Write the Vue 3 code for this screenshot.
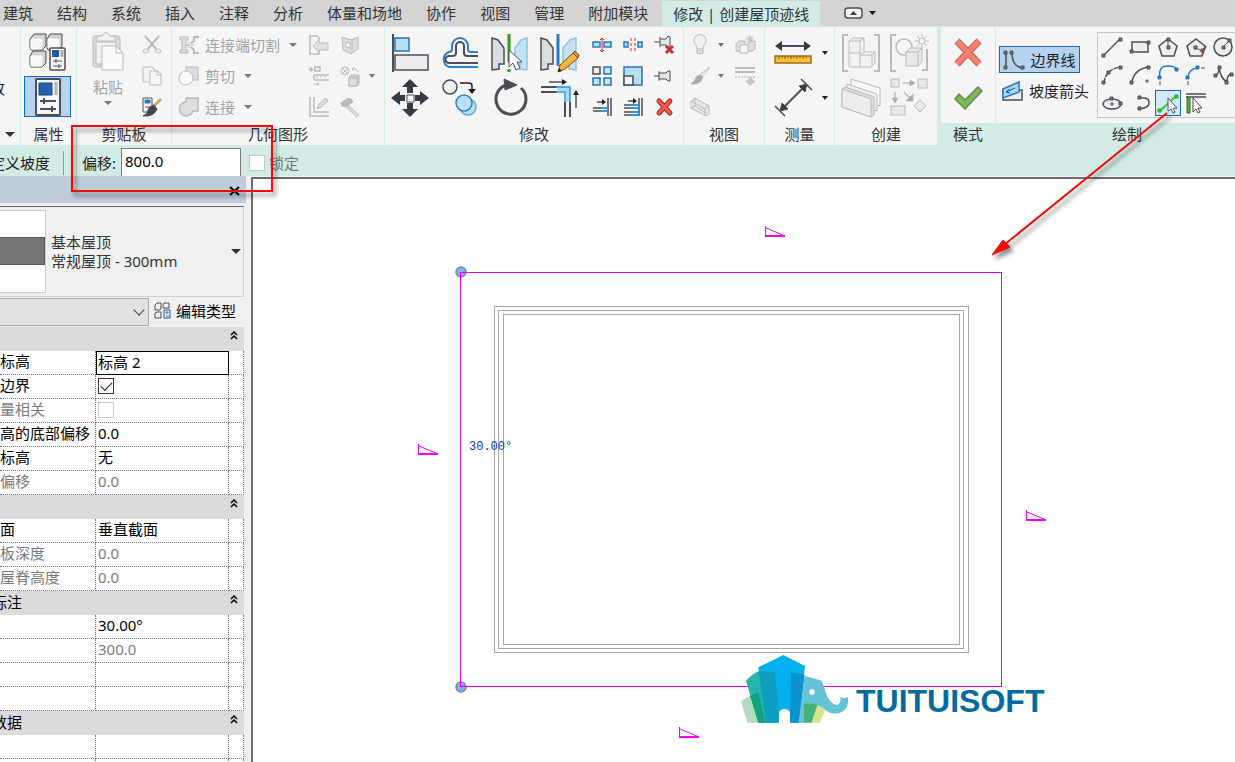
<script setup>
import { ref } from 'vue'

const tabs = ['建筑', '结构', '系统', '插入', '注释', '分析', '体量和场地', '协作', '视图', '管理', '附加模块']
const offset = ref('800.0')
const locked = ref(false)

const groups = [
  {
    title: '',
    rows: [
      { name: '标高', value: '标高 2', active: true },
      { name: '边界', check: true, checked: true },
      { name: '量相关', check: true, checked: false, dim: true },
      { name: '高的底部偏移', value: '0.0' },
      { name: '标高', value: '无' },
      { name: '偏移', value: '0.0', dim: true }
    ]
  },
  {
    title: '',
    rows: [
      { name: '面', value: '垂直截面' },
      { name: '板深度', value: '0.0', dim: true },
      { name: '屋脊高度', value: '0.0', dim: true }
    ]
  },
  {
    title: '标注',
    rows: [
      { name: '', value: '30.00°' },
      { name: '', value: '300.0', dim: true },
      { name: '', value: '' },
      { name: '', value: '' }
    ]
  },
  {
    title: '数据',
    rows: [
      { name: '', value: '' },
      { name: '', value: '' }
    ]
  }
]

const slopes = [[765, 226], [418, 444], [1026, 510], [679, 727]]
</script>

<template>
  <div class="app">
    <nav class="tabs">
      <button v-for="t in tabs" :key="t" class="tab">{{ t }}</button>
      <button class="tab current">修改 | 创建屋顶迹线</button>
      <button class="tab collapse" aria-label="最小化功能区">
        <svg width="34" height="14">
          <rect x="1" y="2" width="17" height="10" rx="3" fill="#f2f2f2" stroke-width="1.500" />
          <path d="M6 9h7L9.500 5z" fill="#3a3f47" stroke="none" />
          <path d="M25 5h7l-3.500 4z" fill="#111" stroke="none" />
        </svg>
      </button>
    </nav>

    <div class="ribbon">
      <section class="panel p-select">
        <div class="body"><span class="cut">修改</span></div>
        <h2><i class="caret large"></i></h2>
      </section>

      <section class="panel p-props">
        <div class="body stack">
          <button class="prop" aria-label="类型属性">
            <svg width="40" height="40">
              <g fill="#cfd2d6">
                <path d="M2 7l4-5h12v12l-4 4H3l-1-2zM19 7l3-5h12v12l-3 4H20l-1-2zM2 24l3-5h13v12l-4 4H3l-1-2z" />
                <path d="M3 7h11v10H3zM20 7h11v9H20zM3 24h11v10H3z" fill="#f8f8f9" stroke="#fff" />
              </g>
              <rect x="22" y="16" width="15" height="22" rx="1" fill="#f8f8f8" stroke-width="1.500" />
              <path d="M24 18h7v7h-7z" fill="#1d5a9e" stroke="none" />
              <path d="M34 18v7" stroke="#aaa" stroke-width="3" />
              <path d="M25 29h9M28 27v4M25 34h9M31 32v4" />
            </svg>
          </button>
          <button class="prop on" aria-label="属性">
            <svg width="30" height="38">
              <rect x="3" y="1" width="24" height="36" rx="1" fill="#f6f6f6" stroke-width="2" />
              <path d="M6 5h13v12H6z" fill="#2463a8" stroke="#134a87" />
              <path d="M23 4v13" stroke="#b3b3b3" stroke-width="3" />
              <path d="M7 23h16M11 20v6M7 31h16M19 28v6" stroke-width="2" />
            </svg>
          </button>
        </div>
        <h2>属性</h2>
      </section>

      <section class="panel p-clip">
        <div class="body row">
          <button class="paste" disabled>
            <svg width="36" height="40">
              <rect x="3" y="5" width="27" height="31" rx="2" fill="#dcdcdc" />
              <path d="M7 10V5h5q4-7 8 0h5v5z" fill="#f1f1f1" />
              <path d="M6 11h20v22H6z" fill="#f2f2f2" />
              <path d="M12 15h14l7 7v17H12z" fill="#fafafa" /><path d="M26 15v7h7" />
            </svg>
            <span>粘贴</span>
            <i class="caret"></i>
          </button>
          <div class="stack small">
            <button disabled aria-label="剪切到剪贴板"><svg width="20" height="20"><path d="M3 1l11 13M17 1L6 14" stroke-width="2" /><ellipse cx="4" cy="16" rx="3" ry="2" fill="#eee" /><ellipse cx="16" cy="16" rx="3" ry="2" fill="#eee" /></svg></button>
            <button disabled aria-label="复制到剪贴板"><svg width="20" height="20"><path d="M1 1h9l3 3v12H1z" fill="#f3f3f3" /><path d="M8 5h8l3 3v11H8z" fill="#f8f8f8" /><path d="M15 5v4h4" /></svg></button>
            <button aria-label="匹配类型属性"><svg width="20" height="20"><path d="M1 1h9v14H1z" fill="#f6f6f6" /><path d="M3 3h5v3H3z" fill="#2b78c4" stroke="#2b78c4" /><path d="M3 10h5" /><path d="M19 2l-7 7" stroke="#c9a66a" stroke-width="3" /><path d="M12 8q-5 1-6 5 0 4-5 6 11 1 14-7z" fill="#42474e" /></svg></button>
          </div>
        </div>
        <h2>剪贴板</h2>
      </section>

      <section class="panel p-geom">
        <div class="body row">
          <div class="stack small wide">
            <button disabled><svg width="20" height="20"><path d="M1 2h8v3H7v10h2v3H1v-3h2V5H1z" fill="#ddd" /><path d="M15 10H8M11 7l-3 3 3 3" /><path d="M20 2h-5v4l-3 2M12 12l3 3v3h5" stroke-width="2" /></svg><span>连接端切割</span><i class="caret"></i></button>
            <button disabled><svg width="20" height="20"><path d="M7 1h12v13H7z" fill="#ddd" /><circle cx="7" cy="12" r="7" fill="#fafafa" /></svg><span>剪切</span><i class="caret"></i></button>
            <button disabled><svg width="20" height="20"><path d="M7 1h12v13h-5a7 7 0 1 1-7-9z" fill="#ddd" stroke-width="1.500" /></svg><span>连接</span><i class="caret"></i></button>
          </div>
          <div class="grid tiny two">
            <button disabled aria-label="连接屋顶"><svg width="20" height="20"><path d="M10 5V3L8 1H1v18h9v-3" fill="#f5f5f5" stroke-width="1.500" /><path d="M4 11l6-6v3h9v7h-9v2z" fill="#e2e2e2" /></svg></button>
            <button disabled aria-label="拆分面"><svg width="20" height="20"><path d="M2 2l9 3 7-3v12l-7 5-8-4z" fill="#dedede" /><path d="M12 5v13" /><path d="M6 7l4 1v5l-4-1z" fill="#f8f8f8" /></svg></button>
            <button disabled aria-label="墙连接"><svg width="20" height="20"><path d="M2 1v4M0 3l2 2 2-2M6 1h5v4H6zM5 9h15M5 14h15M5 9v5" stroke-width="1.500" /><path d="M7 11h2m2 0h2m2 0h2M5 18h5M8 16l2 2-2 2" /></svg></button>
            <button disabled aria-label="填色"><svg width="20" height="20"><circle cx="5" cy="5" r="4" fill="#eee" /><path d="M2 2l6 6M8 2L2 8M18 6q-1-4-6-3M14 1l-2 2 2 2" /><path d="M9 11l2-2h8v9l-2 2H9z" fill="#ccc" /><path d="M9 12h8v8H9z" fill="#dedede" /></svg></button>
            <button disabled aria-label="梁连接"><svg width="20" height="20"><path d="M1 0v19h19M5 0v15h15" stroke-width="1.500" /><path d="M8 12l2-5 7-6 2 3-7 6z" fill="#ddd" /></svg></button>
            <button disabled aria-label="拆除"><svg width="20" height="20"><path d="M9 9l10 9-2 2-10-9z" fill="#ddd" /><path d="M1 6l7-5q4 0 5 4L6 10l-4-1z" fill="#bbb" /></svg></button>
          </div>
          <i class="caret faint"></i>
        </div>
        <h2>几何图形</h2>
      </section>

      <section class="panel p-modify">
        <div class="body row">
          <div class="grid big four">
            <button aria-label="对齐"><svg width="40" height="40"><path d="M3 1v38" stroke-width="2" /><rect x="5" y="5" width="14" height="13" fill="#b9dff2" stroke="#2574b9" stroke-width="1.500" /><rect x="5" y="22" width="33" height="15" fill="#ececf0" stroke-width="1.500" /></svg></button>
            <button aria-label="偏移"><svg width="40" height="40"><path d="M38 19H31Q28 19 28 16V13A8 8 0 0 0 12 13V16Q12 19 9 19A8 8 0 0 0 9 34H38" stroke="#2b82cb" stroke-width="2" /><path d="M38 23H27Q24 23 24 20V13A4 4 0 0 0 16 13V20Q16 23 12 23H9A3 3 0 0 0 9 30H38" stroke-width="2" /></svg></button>
            <button aria-label="镜像 - 拾取轴"><svg width="40" height="40"><path d="M2 5l6 2 6 8v16H9v5l-7 1z" fill="#dcdde2" stroke-width="1.500" /><path d="M37 5l-6 2-6 8v16h5v5l7 1z" fill="#c5e2f2" stroke="#8fc3e3" stroke-width="1.500" /><path d="M19 1v28M19 36v3" stroke="#2d9d22" stroke-width="3" /><path d="M19 17v17l4-4 3 7 4-2-3-6h5z" fill="#fff" /></svg></button>
            <button aria-label="镜像 - 绘制轴"><svg width="40" height="40"><path d="M1 5l6 2 6 8v16H8v5l-7 1z" fill="#dcdde2" stroke-width="1.500" /><path d="M36 5l-6 2-7 8v16h6v5l7 1z" fill="#c5e2f2" stroke="#8fc3e3" stroke-width="1.500" /><path d="M18 1v32" stroke="#2878c8" stroke-width="3" /><path d="M18 39l2-7 13-12 5 5-13 11z" fill="#f4b63a" stroke="#74501a" /><path d="M18 39l1-4 3 3z" fill="#222" stroke="none" /><path d="M33 20l2-2 4 4-1 3z" fill="#e78273" stroke="#74501a" /></svg></button>
            <button aria-label="移动"><svg width="40" height="40"><path d="M20 1l8 8h-5v6h-6V9h-5zM20 39l8-8h-5v-6h-6v6h-5zM1 20l9-7v4h5v6h-5v4zM39 20l-9-7v4h-5v6h5v4z" fill="#353b44" stroke="none" /><rect x="17" y="17" width="7" height="7" fill="#fff" /></svg></button>
            <button aria-label="复制"><svg width="40" height="40"><circle cx="10" cy="9" r="7" fill="#eeeef2" stroke-width="1.500" /><path d="M20 5h9q3 0 3 3v5" stroke="#222" stroke-width="1.500" /><path d="M28 11h8l-4 5z" fill="#222" stroke="none" /><circle cx="28" cy="29" r="8" fill="#b9dff2" stroke="#62a9df" stroke-width="1.500" /><circle cx="24" cy="25" r="8" fill="#b9dff2" stroke="#2f80c4" stroke-width="1.500" /></svg></button>
            <button aria-label="旋转"><svg width="40" height="40"><path d="M31 10A15 15 0 1 1 16 7" stroke-width="3" /><path d="M14 1l13 6-12 5z" fill="#4a4f57" /></svg></button>
            <button aria-label="修剪/延伸为角"><svg width="40" height="40"><path d="M1 9h16M1 14h16M25 24v15M30 24v15" stroke-width="2" /><path d="M17 11h11v13" stroke="#a8d8f8" stroke-width="4" /><path d="M16 9h14v15M16 14h9v10" stroke="#3294e8" stroke-width="1.500" /><path d="M9 4h15M36 30V15" stroke-width="1.500" /><path d="M22 1l5 3-5 3zM33 17l3-5 3 5z" fill="#222" stroke="none" /></svg></button>
          </div>
          <div class="grid tiny three">
            <button aria-label="拆分图元"><svg width="20" height="20"><path d="M1 7h7v5H1zM12 7h7v5h-7z" fill="#b6ddf5" stroke="#2878b8" stroke-width="1.500" /><path d="M10 3v14M8 5l2-2 2 2M8 15l2 2 2-2" stroke="#d22" /></svg></button>
            <button aria-label="用间隙拆分"><svg width="20" height="20"><path d="M1 7h4v5H1zM15 7h4v5h-4z" fill="#b6ddf5" stroke="#2878b8" stroke-width="1.500" /><path d="M8 3v14M12 3v14" stroke="#d22" stroke-dasharray="3 2" /></svg></button>
            <button aria-label="解锁"><svg width="20" height="20"><path d="M0 7h6M6 2v10M6 4h6l2-3 2 1v9l-2 1-2-2H6" fill="#e5e5e5" /><path d="M12 11l7 7M19 11l-7 7" stroke="#c9302c" stroke-width="3" /></svg></button>
            <button aria-label="阵列"><svg width="20" height="20"><path d="M1 1h7v7H1z" fill="#eee" stroke-width="1.500" /><path d="M12 1h7v7h-7zM1 12h7v7H1zM12 12h7v7h-7z" fill="#c2e4f7" stroke="#2574b9" stroke-width="1.500" /></svg></button>
            <button aria-label="缩放"><svg width="20" height="20"><path d="M1 1h18v18H1z" fill="#b9dff2" stroke="#2574b9" stroke-width="1.500" /><path d="M1 10h9v9H1z" fill="#f2f2f2" stroke-width="1.500" /></svg></button>
            <button aria-label="锁定位置"><svg width="20" height="20"><path d="M0 10h5M5 5v10M5 7h7l2-2h2v10h-2l-2-2H5" fill="#e5e5e5" /></svg></button>
            <button aria-label="修剪/延伸单个图元"><svg width="20" height="20"><path d="M1 11h8M1 14h8M19 1v18M16 1v18M5 5h6" stroke-width="1.500" /><path d="M9 11h7M9 14h7" stroke="#3294e8" stroke-width="2" /><path d="M10 2l4 3-4 3z" fill="#222" stroke="none" /></svg></button>
            <button aria-label="修剪/延伸多个图元"><svg width="20" height="20"><path d="M1 8h7M1 11h7M1 15h7M1 18h7M19 1v18M16 1v18M5 4h6" stroke-width="1.500" /><path d="M8 8h8M8 11h8M8 15h8M8 18h8" stroke="#3294e8" stroke-width="2" /><path d="M10 1l4 3-4 3z" fill="#222" stroke="none" /></svg></button>
            <button aria-label="删除"><svg width="20" height="20"><path d="M5 4l11 12M16 4L5 16" stroke="#a52620" stroke-width="5" stroke-linecap="round" /><path d="M5 4l11 12M16 4L5 16" stroke="#f25b52" stroke-width="3" stroke-linecap="round" /></svg></button>
          </div>
        </div>
        <h2>修改</h2>
      </section>

      <section class="panel p-view">
        <div class="body row">
          <div class="stack small arrows">
            <button disabled aria-label="隐藏"><svg width="20" height="20"><path d="M7 14q0-3-2-5a6 6 0 1 1 10 0q-2 2-2 5v4q-3 2-6 0zM7 14h6M7 16h6" fill="#f0f0f0" /></svg><i class="caret faint"></i></button>
            <button disabled aria-label="替换"><svg width="20" height="20"><path d="M19 1l-9 8 2 2 7-8z" fill="#eee" /><path d="M10 9q-5 1-5 5l-4 4q10 1 12-7z" fill="#aaa" /></svg><i class="caret faint"></i></button>
            <button disabled aria-label="选择框"><svg width="20" height="20"><path d="M1 4l4-3 14 8v8l-3 2L1 11z" fill="#e8e8e8" /><path d="M1 4l14 8v7M15 12l4-3M5 1v8l11 7M1 11l4-2" /></svg></button>
          </div>
          <div class="stack small">
            <button disabled aria-label="置换图元"><svg width="20" height="20"><path d="M1 9l3-3h6v8l-3 2H1zM12 9l3-3h5v8l-3 2h-5z" fill="#ddd" /><path d="M5 10h8v8H5z" fill="#f7f7f7" /><path d="M15 0v8M11 4h8M12 1l6 6M18 1l-6 6" /></svg></button>
            <button disabled aria-label="线处理"><svg width="20" height="20"><path d="M0 2h20M0 6h20" stroke-width="2" /><path d="M0 11h20" stroke-dasharray="2 1" /><path d="M14 12h3v3h3l-5 4-4-4h3z" fill="#ccc" /></svg></button>
          </div>
        </div>
        <h2>视图</h2>
      </section>

      <section class="panel p-measure">
        <div class="body">
          <div class="stack bigcol">
            <button aria-label="测量"><svg width="40" height="40"><path d="M6 13h28" stroke-width="2" /><path d="M2 13l7-5v10zM38 13l-7-5v10z" fill="#353b44" stroke="none" /><path d="M2 23h36v7H2z" fill="#f2c230" stroke="#a9652a" stroke-width="1.500" /><path d="M6 23v3m3-3v2m3-2v3m3-3v2m3-2v3m3-3v2m3-2v3m3-3v2m3-2v3m3-3v2" stroke="#8a5c14" /></svg><i class="caret dark"></i></button>
            <button aria-label="对齐尺寸标注"><svg width="40" height="40"><path d="M28 1l11 11M2 28l10 10" stroke-width="1.500" /><path d="M10 30L31 9" stroke-width="2" /><path d="M34 6l-8 2 6 6zM7 33l8-2-6-6z" fill="#353b44" /></svg><i class="caret dark"></i></button>
          </div>
        </div>
        <h2>测量</h2>
      </section>

      <section class="panel p-create">
        <div class="body">
          <div class="grid big pair">
            <button disabled aria-label="创建组"><svg width="40" height="40"><path d="M7 2H2v36h5M33 2h5v36h-5" stroke-width="2" /><path d="M8 8l4-3h11v14h11v11l-4 4H8z" fill="#f2f2f2" /><path d="M8 8h11v26M19 8l4-3M8 20h12M20 22h11l3-3M31 22v11M19 22l4-3" /></svg></button>
            <button disabled aria-label="创建零件"><svg width="40" height="40"><path d="M7 2H2v36h5M33 37h5V16" stroke-width="2" /><circle cx="15" cy="14" r="8" stroke-width="1.500" /><path d="M17 19l4-4h12v13l-4 5H17z" fill="#e9e9e9" /><path d="M17 19h12v14M29 19l4-4" /><path d="M33 1v14M26 8h14M28 3l10 10M38 3L28 13" /><circle cx="33" cy="8" r="3" fill="#f5f5f5" /></svg></button>
            <button disabled aria-label="创建部件"><svg width="40" height="40"><path d="M10 1l29 9v18l-8-2-21-8z" fill="#f8f8f8" /><path d="M6 6l30 10v17l-6-2L6 22z" fill="#eee" /><path d="M1 11l3-2 29 10v18l-3 2L1 29z" fill="#ddd" /><path d="M1 11l29 10v18L1 29z" fill="#ededed" /></svg></button>
            <button disabled aria-label="创建类似实例"><svg width="40" height="40"><path d="M2 1h8v8H2zM29 1h9v9h-9zM2 28h14v9H2zM31 22l6 6-6 6-6-6z" fill="#e9e9e9" /><path d="M14 5h8M6 14v8M15 14l6 6" stroke-width="1.500" /><path d="M21 2l5 3-5 3zM3 20l3 5 3-5zM24 16v7h-7z" fill="#aaa" /></svg></button>
          </div>
        </div>
        <h2>创建</h2>
      </section>

      <section class="panel context p-mode">
        <div class="body stack bigcol">
          <button aria-label="取消编辑模式"><svg width="40" height="40"><path d="M9 8l22 23M31 8L9 31" stroke="#c75c52" stroke-width="7" /><path d="M9 8l22 23M31 8L9 31" stroke="#f58072" stroke-width="5" /></svg></button>
          <button aria-label="完成编辑模式"><svg width="40" height="40"><path d="M7 21l4-5 6 6L30 9l4 4-17 18z" fill="#7cb660" stroke="#5f8e48" stroke-width="1.500" /></svg></button>
        </div>
        <h2>模式</h2>
      </section>

      <section class="panel context p-draw">
        <div class="body row">
          <div class="kinds">
            <button class="on"><svg width="22" height="20"><path d="M3 3v15M9 3q0 14 11 15" stroke-width="1.500" /><path d="M1 1h3v3H1zM1 16h3v3H1zM7 1h3v3H7zM18 16h3v3h-3z" fill="#777" /></svg><span>边界线</span></button>
            <button><svg width="22" height="20"><path d="M1 9h19v10H1z" fill="#eee" stroke-width="1.500" /><path d="M1 8l16-7v10L1 17z" fill="#a9d6f3" stroke="#2878c8" stroke-width="1.500" /><path d="M4 11l9-4M7 8l-3 3 4 1" stroke="#155a9d" /></svg><span>坡度箭头</span></button>
          </div>
          <div class="palette">
            <button aria-label="线"><svg width="20" height="20"><path d="M2 18L18 2" stroke-width="1.500" /><path d="M0 17h3v3H0zM17 1h3v3h-3z" fill="#777" /></svg></button>
            <button aria-label="矩形"><svg width="20" height="20"><path d="M2 5h16v10H2z" fill="#eee" stroke-width="1.500" /><path d="M0 13h3v3H0zM17 4h3v3h-3z" fill="#777" /></svg></button>
            <button aria-label="内接多边形"><svg width="20" height="20"><path d="M10 2l9 7-3 10H4L1 9z" fill="#eee" stroke-width="1.500" /><path d="M10 3v8" /><path d="M9 1h3v3H9zM9 9h3v3H9z" fill="#777" /></svg></button>
            <button aria-label="外接多边形"><svg width="20" height="20"><path d="M10 2l9 7-3 10H4L1 9z" fill="#eee" stroke-width="1.500" /><path d="M10 11l6 3" /><path d="M20 9l-4 10" stroke="#e22" stroke-dasharray="4 2" stroke-width="1.500" /><path d="M8 9h3v3H8zM15 12h3v3h-3z" fill="#777" /></svg></button>
            <button aria-label="圆形"><svg width="20" height="20"><circle cx="9" cy="10" r="9" fill="#eee" stroke-width="1.500" /><path d="M9 10l6-6" /><path d="M8 9h3v3H8zM14 2h3v3h-3z" fill="#777" /></svg></button>
            <button aria-label="起点-终点-半径弧"><svg width="20" height="20"><path d="M2 18Q3 5 18 2" stroke-width="1.500" stroke-dasharray="5 1" /><path d="M0 16h3v3H0zM5 6h3v3H5zM17 1h3v3h-3z" fill="#777" /></svg></button>
            <button aria-label="圆心-端点弧"><svg width="20" height="20"><path d="M2 18Q3 5 18 2" stroke-width="1.500" /><path d="M0 16h3v3H0zM17 1h3v3h-3z" fill="#777" /><path d="M17 14v4M15 16h4" /></svg></button>
            <button aria-label="相切-端点弧"><svg width="20" height="20"><path d="M2 12Q0 1 10 1Q17 1 18 4" stroke="#2878c8" stroke-width="1.500" /><path d="M0 11h3v3H0zM17 3h3v3h-3z" fill="#2878c8" stroke="#2878c8" /><path d="M2 16v4" /></svg></button>
            <button aria-label="圆角弧"><svg width="20" height="20"><path d="M2 12Q3 4 11 3" stroke="#2878c8" stroke-width="1.500" /><path d="M0 11h3v3H0zM10 1h3v3h-3z" fill="#2878c8" stroke="#2878c8" /><path d="M2 16v4M15 3h4" /></svg></button>
            <button aria-label="样条曲线"><svg width="20" height="20"><path d="M1 11Q5 9 5 3Q7 14 13 17Q13 10 17 9" stroke-width="1.500" /><path d="M0 9h3v3H0zM4 1h3v3H4zM11 16h3v3h-3zM16 8h3v3h-3z" fill="#777" /></svg></button>
            <button aria-label="椭圆"><svg width="20" height="20"><ellipse cx="10" cy="11" rx="9" ry="5" fill="#eee" stroke-width="1.500" /><path d="M10 9v4M8 11h4" /><path d="M17 9h3v3h-3zM8 4h3v3H8z" fill="#777" /></svg></button>
            <button aria-label="半椭圆"><svg width="20" height="20"><path d="M9 5h5q5 0 5 5t-10 6" stroke-width="1.500" /><path d="M8 3h3v3H8zM8 14h3v3H8z" fill="#777" /></svg></button>
            <button class="on" aria-label="拾取线"><svg width="22" height="22"><path d="M3 19L19 4" stroke="#3c3" stroke-width="2" /><path d="M1 17h3v3H1zM18 3h3v3h-3z" fill="#3c3" stroke="#2a2" /><path d="M11 6v13l3-2 2 4 2-1-2-4h4z" fill="#fff" /></svg></button>
            <button aria-label="拾取墙"><svg width="20" height="20"><path d="M0 1h20M0 4h20" stroke-width="1.500" /><path d="M1 4h3v16H1z" fill="#58a83e" stroke="#2f7421" /><path d="M7 5v14l3-3 2 4 2-1-2-4h4z" fill="#fff" /></svg></button>
          </div>
        </div>
        <h2>绘制</h2>
      </section>
    </div>

    <div class="options">
      <span class="slope">定义坡度</span>
      <label class="offset" for="offset">偏移:</label>
      <input id="offset" v-model="offset" class="field" type="text">
      <label class="lock"><input v-model="locked" type="checkbox" disabled>锁定</label>
    </div>

    <div class="work">
      <aside class="side">
        <header><button aria-label="关闭"><svg width="12" height="10"><path d="M1 1l9 8M10 1L1 9" stroke="#000" stroke-width="2" /></svg></button></header>
        <button class="type">
          <span class="thumb"><i></i></span>
          <span class="names">基本屋顶<br>常规屋顶 - 300mm</span>
          <i class="caret large"></i>
        </button>
        <div class="filter">
          <select aria-label="属性过滤器"><option></option></select>
          <button>
            <svg width="17" height="17"><path d="M1 3l2-2h4v5L6 8H1zM9 3l1-2h5v5H9zM1 11l2-1h4v6H1z" fill="#eee" /><path d="M10 8h6v8h-6z" fill="#eaf3fb" stroke="#24527f" /><path d="M12 10h2v1h-2zM12 14h3" stroke="#2b78c4" /></svg>
            编辑类型
          </button>
        </div>
        <table>
          <colgroup><col class="c1"><col><col class="c3"></colgroup>
          <tbody v-for="(g, gi) in groups" :key="gi">
            <tr class="head">
              <th colspan="3"><div><span>{{ g.title }}</span><svg width="8" height="9"><path d="M1 4l3-3 3 3M1 8l3-3 3 3" stroke="#000" stroke-width="1.500" /></svg></div></th>
            </tr>
            <tr v-for="(r, ri) in g.rows" :key="ri" :class="{ dim: r.dim }">
              <td class="name">{{ r.name }}</td>
              <td :class="{ active: r.active }">
                <input v-if="r.check" type="checkbox" :checked="r.checked" :disabled="r.dim" :aria-label="r.name">
                <template v-else>{{ r.value }}</template>
              </td>
              <td></td>
            </tr>
          </tbody>
        </table>
      </aside>

      <main class="canvas">
        <svg class="drawing">
          <g transform="translate(-253 -179)">
            <g stroke="#a6a6a6">
              <rect x="494.500" y="306.500" width="474" height="346" />
              <rect x="498.500" y="310.500" width="465" height="338" />
              <rect x="503.500" y="314.500" width="456" height="330" />
            </g>
            <circle cx="461" cy="272" r="5" fill="#7fb0f5" stroke="#7d8796" stroke-width="1.500" />
            <circle cx="461" cy="687" r="5" fill="#7fb0f5" stroke="#7d8796" stroke-width="1.500" />
            <rect x="460.500" y="272.500" width="541" height="414" stroke="#e000f8" />
            <g stroke="#f000f8">
              <g v-for="([x, y], i) in slopes" :key="i" :transform="`translate(${x} ${y})`">
                <path d="M.5 0v10M0 1.500l19 8" />
                <path d="M0 10h20" stroke-width="2" />
              </g>
            </g>
            <text x="469" y="450" class="angle">30.00°</text>
            <g transform="translate(730 640) scale(.33333)" stroke="none">
              <path d="M33 183L60 168 85 248H52z" fill="#b3dbbf" />
              <path d="M48 122Q70 98 90 92L135 97 147 248H85z" fill="#25b3ac" />
              <path d="M60 168L85 157 106 248H85z" fill="#0ea37c" />
              <path d="M85 82L160 45 225 78 207 248H108z" fill="#04b0ee" />
              <path d="M86 93L135 97 147 215V248H108z" fill="#0e9ec0" />
              <path d="M183 97L224 104 207 248H180z" fill="#0c93cf" />
              <path d="M224 107L275 122Q282 140 290 165Q302 194 322 195Q334 188 331 170Q342 178 354 170Q358 205 335 216Q312 228 285 210Q262 190 222 190L224 248H206z" fill="#64c3d6" />
              <path d="M222 190Q245 188 264 194L245 248H222z" fill="#45b27a" />
              <path d="M262 195L286 208 270 248H245z" fill="#d9e58c" />
              <path d="M147 249V215Q163 198 180 215V249z" fill="#fff" />
              <circle cx="246" cy="156" r="8" fill="#fff" />
            </g>
            <text x="856" y="712" class="brand">TUITUISOFT</text>
          </g>
        </svg>
      </main>
    </div>

    <svg class="marks" aria-hidden="true">
      <g class="red">
        <rect x="72" y="126" width="200" height="65" stroke="#f50a0a" stroke-width="2" />
        <path d="M1167 113L1004 245" stroke="#f50a0a" stroke-width="2" />
        <path d="M992 255L1003 240 1010 247z" fill="#f50a0a" stroke="#f50a0a" />
      </g>
    </svg>
  </div>
</template>

<style>
html, body { height: 100%; overflow: hidden; }
#app { height: 100%; }
</style>

<style scoped>
.app { position: relative; display: flex; flex-direction: column; height: 100%; overflow: hidden; background: #f0f0f0; color: #1e1e1e; font: 15px/20px "Noto Sans", "Noto Sans CJK SC", sans-serif; }
* { box-sizing: border-box; }
button, input, select { font: inherit; color: inherit; margin: 0; }
button { display: flex; align-items: center; justify-content: center; padding: 0; border: 0; background: none; }
button:disabled { color: #a3a3a3; }
svg { display: block; flex: none; fill: none; stroke: #4a4f57; overflow: visible; }
button:disabled svg { stroke: #bababa; }
.row { display: flex; }
.stack { display: flex; flex-direction: column; }
.grid { display: grid; }

.tabs { display: flex; height: 26px; background: #d4d4d4; padding-left: 3px; flex: none; }
.tab { flex: none; margin-right: 24px; white-space: pre; color: #333; }
.tab.current { margin: 1px 24px 0 -10px; padding: 0 11px; background: #d3ebe7; }

.ribbon { display: flex; flex: none; height: 120px; padding: 1px 0; background: #d3ebe7; gap: 1px; overflow: hidden; }
.panel { flex: none; display: flex; flex-direction: column; background: #f5f5f5; }
.body { flex: 1; }
h2 { display: flex; justify-content: center; align-items: center; height: 22px; margin: 0; font-size: 15px; font-weight: 400; line-height: 20px; color: #333; }
.p-select { width: 20px; }
.p-select .body { display: flex; justify-content: flex-end; align-items: center; width: 5px; overflow: hidden; padding-top: 26px; white-space: nowrap; }
.p-props { width: 55px; }
.p-clip { width: 94px; }
.p-geom { width: 212px; }
.p-modify { width: 298px; }
.p-view { width: 80px; }
.p-measure { width: 69px; }
.p-create { width: 102px; }
.p-mode { width: 54px; margin-left: 3px; }
.p-draw { flex: 1 0 262px; }
.context h2 { background: #d3ebe7; }

.caret { flex: none; width: 0; height: 0; border: 4px solid transparent; border-top-color: #777; border-bottom: 0; }
.caret.large { border-width: 5px 5px 0; border-top-color: #333; }
.caret.dark { border-width: 4px 3px 0; border-top-color: #222; }
.caret.faint { border-width: 4px 3px 0; }

.p-props .body { padding: 4px 3px 0; gap: 4px; }
.prop { width: 47px; height: 41px; }
.prop.on, .kinds .on, .palette .on { background: #b5d3ee; border: 1px solid #1a66b8; }

.paste { flex-direction: column; justify-content: flex-start; width: 62px; padding-top: 4px; }
.paste span { margin-top: 6px; }
.paste .caret { margin-top: 4px; }
.small { padding-top: 2px; }
.small button { height: 31px; width: 26px; }
.wide { width: 131px; padding-left: 7px; }
.wide button { width: auto; justify-content: flex-start; }
.wide span { margin: 0 9px 0 6px; }
.tiny { padding-top: 2px; grid-auto-rows: 31px; align-content: start; }
.tiny.two { grid-template-columns: repeat(2, 31px); }
.tiny.three { grid-template-columns: repeat(3, 31px); margin-left: 1px; }
.p-geom .body > .caret { margin: 47px 0 0 4px; }
.big { padding-top: 3px; grid-auto-rows: 45px; align-content: start; }
.big.four { grid-template-columns: repeat(4, 50px); }
.big.pair { grid-template-columns: repeat(2, 48px); padding-left: 2px; }
.bigcol { padding-top: 3px; }
.bigcol button { height: 45px; }
.p-measure button { gap: 9px; padding-left: 1px; }
.p-view .body { padding-left: 6px; }
.arrows { width: 42px; }
.arrows button { width: 34px; gap: 8px; justify-content: flex-start; }

.kinds { width: 101px; padding: 19px 0 0 3px; }
.kinds button { width: 81px; height: 27px; gap: 5px; }
.kinds button + button { width: 95px; margin-top: 4px; justify-content: flex-start; padding-left: 3px; }
.palette { flex: 1; display: grid; grid-template-columns: repeat(5, 28px); grid-auto-rows: 28px; height: 86px; margin-top: 5px; border: 1px solid #c6c6c6; border-right: 0; align-content: start; }
.palette button { margin: 1px; }
.palette .on { background: #cfe9f7; }

.options { display: flex; align-items: center; flex: none; height: 30px; background: #d3ebe7; color: #222; }
.slope { display: flex; justify-content: flex-end; width: 50px; overflow: hidden; white-space: nowrap; margin-top: 4px; }
.offset { margin: 4px 4px 0 14px; padding-left: 18px; box-shadow: -1px 0 #8c9c9a; line-height: 24px; width: 53px; white-space: nowrap; }
.field { width: 120px; height: 28px; margin-top: 2px; border: 1px solid #7a7a7a; border-bottom: 0; padding: 0 3px 3px; background: #fff; color: #000; outline: 0; }
.lock { display: flex; align-items: center; gap: 4px; margin: 4px 0 0 8px; color: #6e7775; }
input[type="checkbox"] { appearance: none; width: 16px; height: 16px; border: 1px solid #333; background: #fff; display: block; }
input[type="checkbox"]:disabled { border-color: #c9c9c9; }
input[type="checkbox"]:checked::after { content: ""; display: block; width: 10px; height: 5px; margin: 3px 2px; border: solid #222; border-width: 0 0 1px 1px; transform: rotate(-45deg); }

.work { display: flex; flex: 1; min-height: 0; }
.side { width: 246px; flex: none; overflow: hidden; }
.side header { display: flex; justify-content: flex-end; height: 27px; padding: 2px 5px 0 0; background: #bfccda; }
.type { width: 244px; height: 91px; margin-top: 3px; border: 1px solid #cfcfcf; border-top: 1px solid #666; border-left: 0; justify-content: flex-start; text-align: left; color: #333; line-height: 19px; }
.thumb { width: 46px; height: 83px; border: 1px solid #ccc; border-left: 0; background: #fff; padding-top: 26px; margin-right: 5px; }
.thumb i { display: block; height: 28px; background: #777; border: 1px solid #555; border-left: 0; }
.names { flex: 1; }
.type .caret { margin-right: 2px; }
.filter { position: relative; display: flex; height: 30px; align-items: flex-start; padding-top: 1px; color: #000; }
.filter select { appearance: none; width: 149px; height: 28px; border: 1px solid #aaa; border-left: 0; border-radius: 0; background: #e2e2e2; }
.filter::before { content: ""; position: absolute; left: 135px; top: 9px; width: 7px; height: 7px; border: solid #444; border-width: 0 1px 1px 0; transform: rotate(45deg); pointer-events: none; }
.filter button { gap: 5px; margin-left: 5px; height: 25px; }

table { width: 244px; table-layout: fixed; border-collapse: separate; border-spacing: 0; color: #000; background: #fff; line-height: 20px; }
.c1 { width: 96px; }
.c3 { width: 15px; }
tr { height: 24px; }
td { height: 24px; padding: 0 0 3px 2px; border: dotted #777; border-width: 0 1px 1px 0; white-space: nowrap; overflow: hidden; }
td.name { padding-left: 0; }
td.active { border: 1px solid #000; padding: 0 1px 2px; }
td input { margin-top: 2px; }
.dim { color: #7b7b7b; }
th { height: 24px; padding: 0; background: #dbdbdb; font-weight: 400; }
th div { display: flex; justify-content: space-between; align-items: center; height: 24px; padding: 0 6px 2px 0; }
th span { display: flex; justify-content: flex-end; width: 22px; overflow: hidden; white-space: nowrap; }
th svg { margin-bottom: 6px; }

.canvas { flex: 1; min-width: 0; margin: 1px 0 0 5px; border: solid #6c6c6c; border-width: 2px 0 0 2px; background: #fff; overflow: hidden; }
.drawing { width: 100%; height: 100%; }
.angle { font: 12px "Liberation Mono", monospace; fill: #0039b8; stroke: none; }
.brand { font: bold 32px "Liberation Sans", sans-serif; fill: #056b9e; stroke: none; }
.marks { position: absolute; inset: 0; width: 100%; height: 100%; pointer-events: none; }
.red { filter: drop-shadow(3px 4px 2px #0007); }
</style>
